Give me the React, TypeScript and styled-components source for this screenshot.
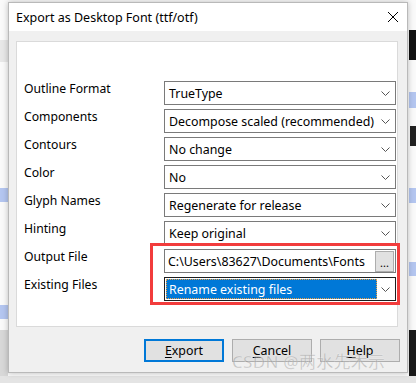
import { Fragment } from 'react';
import styled, { createGlobalStyle } from 'styled-components';

const Global = createGlobalStyle`
  html, body { margin: 0; padding: 0; }
  body {
    width: 416px;
    height: 383px;
    overflow: hidden;
    background: #f7f7f7;
    font-family: "Noto Sans", "Liberation Sans", sans-serif;
  }
`;

const Screen = styled.div`
  position: relative;
  width: 416px;
  height: 383px;
  overflow: hidden;
  background: #fafafa;
  display: flex;
  padding: 2px 8px 0 8px;
  box-sizing: border-box;
`;

const Scrap = styled.div<{ $x: number; $y: number; $w: number; $h: number; $c: string }>`
  position: absolute;
  left: ${(p) => p.$x}px;
  top: ${(p) => p.$y}px;
  width: ${(p) => p.$w}px;
  height: ${(p) => p.$h}px;
  background: ${(p) => p.$c};
`;

const Dialog = styled.div`
  position: relative;
  width: 400px;
  height: 371px;
  background: #f0f0f0;
  border: 1px solid #b9b9b9;
  box-sizing: border-box;
  box-shadow: 0 0 6px rgba(0, 0, 0, 0.25);
  display: flex;
  flex-direction: column;
`;

const TitleBar = styled.div`
  height: 28px;
  background: #fff;
  display: flex;
  align-items: center;
  justify-content: space-between;
  padding: 0 8px 0 7px;
  font-size: 12.5px;
  color: #000;
`;

const Body = styled.div`
  flex: 1;
  display: flex;
  flex-direction: column;
  padding: 10px 9px 0 7px;
`;

const Panel = styled.div`
  height: 286px;
  box-sizing: border-box;
  background: #fff;
  border: 1px solid #dadada;
  padding: 39px 1px 0 7px;
`;

const Form = styled.div`
  display: grid;
  grid-template-columns: 140px 1fr;
  grid-auto-rows: 24px;
  row-gap: 4px;
`;

const Label = styled.div`
  font-size: 12.2px;
  line-height: 16px;
  color: #000;
  white-space: nowrap;
`;

const Combo = styled.div<{ $focused?: boolean }>`
  position: relative;
  box-sizing: border-box;
  border: 1px solid ${(p) => (p.$focused ? '#1e1e1e' : '#7a7a7a')};
  background: #fff;
  display: flex;
  align-items: center;
  padding: ${(p) => (p.$focused ? '1px' : '0 0 0 4px')};
  font-size: 12.4px;
  color: #000;
  white-space: nowrap;
`;

const Selected = styled.div`
  width: 211px;
  height: 20px;
  box-sizing: border-box;
  background: #0078d7;
  color: #fff;
  border: 1px dotted #f0a040;
  display: flex;
  align-items: center;
  padding-left: 2px;
`;

const Chevron = styled.svg`
  position: absolute;
  right: 5px;
  top: 9px;
`;

const Field = styled.div`
  box-sizing: border-box;
  border: 1px solid #7a7a7a;
  background: #fff;
  display: flex;
  align-items: center;
  justify-content: space-between;
  padding: 0 0 0 3px;
  font-size: 12.4px;
  color: #000;
  white-space: nowrap;
`;

const Browse = styled.div`
  width: 19px;
  height: 21px;
  box-sizing: border-box;
  background: #e1e1e1;
  border: 1px solid #adadad;
  margin-right: 1px;
  font-size: 11px;
  line-height: 22px;
  text-align: center;
`;

const Buttons = styled.div`
  display: flex;
  justify-content: flex-end;
  gap: 8px;
  margin: 12px -2px 0 0;
`;

const Button = styled.div<{ $primary?: boolean }>`
  width: 80px;
  height: 23px;
  box-sizing: border-box;
  background: #e1e1e1;
  border: ${(p) => (p.$primary ? '2px solid #0078d7' : '1px solid #adadad')};
  font-size: 12.4px;
  display: flex;
  align-items: center;
  justify-content: center;
  color: #000;
  u { text-decoration: underline; text-underline-offset: 2px; }
`;

const RedBox = styled.div`
  position: absolute;
  left: 141px;
  top: 240px;
  width: 250px;
  height: 62px;
  box-sizing: border-box;
  border: 3px solid #f23c3c;
`;

const Watermark = styled.div`
  position: absolute;
  left: 223px;
  top: 350px;
  font-family: "Noto Sans", "Noto Sans CJK SC", sans-serif;
  font-size: 17px;
  line-height: 18px;
  color: rgba(140, 140, 140, 0.45);
  -webkit-text-stroke: 0.3px rgba(255, 255, 255, 0.6);
  white-space: nowrap;
  letter-spacing: 0.3px;
`;

function Down() {
  return (
    <Chevron width="9" height="5" viewBox="0 0 9 5">
      <path d="M0.5 0.5 L4.5 4.5 L8.5 0.5" fill="none" stroke="#555" strokeWidth="1" />
    </Chevron>
  );
}

const rows = [
  { label: 'Outline Format', value: 'TrueType' },
  { label: 'Components', value: 'Decompose scaled (recommended)' },
  { label: 'Contours', value: 'No change' },
  { label: 'Color', value: 'No' },
  { label: 'Glyph Names', value: 'Regenerate for release' },
  { label: 'Hinting', value: 'Keep original' },
];

const scraps = [
  { x: 0, y: 40, w: 8, h: 22, c: '#e8e8e8' },
  { x: 0, y: 188, w: 8, h: 14, c: '#b4c6f0' },
  { x: 0, y: 305, w: 8, h: 14, c: '#b4c6f0' },
  { x: 0, y: 330, w: 8, h: 53, c: '#d8d8d8' },
  { x: 409, y: 30, w: 7, h: 30, c: '#111' },
  { x: 409, y: 92, w: 7, h: 16, c: '#b4c6f0' },
  { x: 410, y: 126, w: 6, h: 20, c: '#222' },
  { x: 409, y: 188, w: 7, h: 15, c: '#b4c6f0' },
  { x: 409, y: 262, w: 7, h: 14, c: '#b4c6f0' },
  { x: 409, y: 330, w: 7, h: 53, c: '#1a1a1a' },
  { x: 0, y: 376, w: 416, h: 7, c: '#e4e4e4' },
];

export default function App() {
  return (
    <Screen>
      <Global />
      {scraps.map((s, i) => (
        <Scrap key={i} $x={s.x} $y={s.y} $w={s.w} $h={s.h} $c={s.c} />
      ))}
      <Dialog>
        <TitleBar>
          <span>Export as Desktop Font (ttf/otf)</span>
          <svg width="12" height="12" viewBox="0 0 12 12">
            <path d="M1 1 L11 11 M11 1 L1 11" stroke="#000" strokeWidth="1" />
          </svg>
        </TitleBar>
        <Body>
          <Panel>
            <Form>
              {rows.map((r) => (
                <Fragment key={r.label}>
                  <Label>{r.label}</Label>
                  <Combo>
                    {r.value}
                    <Down />
                  </Combo>
                </Fragment>
              ))}
              <Label>Output File</Label>
              <Field>
                C:\Users\83627\Documents\Fonts
                <Browse>...</Browse>
              </Field>
              <Label>Existing Files</Label>
              <Combo $focused>
                <Selected>Rename existing files</Selected>
                <Down />
              </Combo>
            </Form>
          </Panel>
          <Buttons>
            <Button $primary>
              <u>E</u>xport
            </Button>
            <Button>
              <u>C</u>ancel
            </Button>
            <Button>
              <u>H</u>elp
            </Button>
          </Buttons>
        </Body>
        <RedBox />
        <Watermark>CSDN @两水先木示</Watermark>
      </Dialog>
    </Screen>
  );
}
